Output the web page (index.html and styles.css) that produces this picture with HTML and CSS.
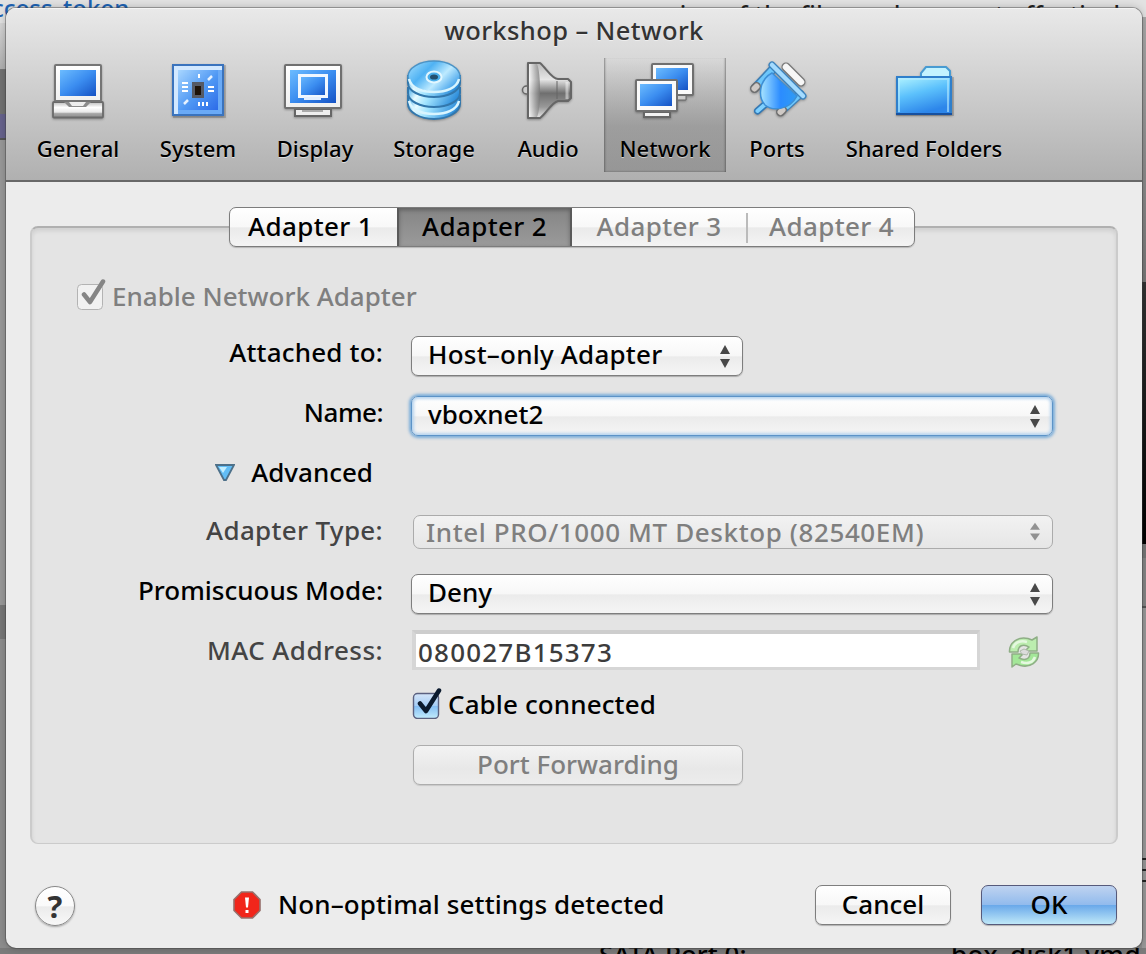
FILE: index.html
```html
<!DOCTYPE html>
<html lang="en">
<head>
<meta charset="utf-8">
<title>workshop – Network</title>
<link rel="stylesheet" href="styles.css">
</head>
<body>
<div class="desktop">
  <div class="back back-top"><span class="back-link">ccess_token</span><span class="back-copy">version of the files and may not effectively</span></div>
  <div class="back back-left"><i class="seg s1"></i><i class="seg s2"></i><i class="seg s3"></i><i class="seg s4"></i><i class="seg s5"></i></div>
  <div class="back back-right"><i class="seg r1"></i><i class="seg r2"></i><i class="seg r3"></i><i class="seg r4"></i><i class="seg r5"></i><i class="seg r6"></i><i class="seg r7"></i></div>
  <div class="back back-bottom"><span class="port">SATA Port 0:</span><span class="disk">box_disk1.vmd</span></div>

  <main class="window">
    <header class="head">
      <h1 class="title">workshop – Network</h1>
      <nav class="toolbar">
        <a class="tool">
          <svg class="icon" viewBox="46 58 64 64">
            <defs>
              <linearGradient id="scr" x1="0" y1="0" x2="1" y2="1"><stop offset="0" stop-color="#6cbcff"/><stop offset=".5" stop-color="#3b8df0"/><stop offset="1" stop-color="#1552c4"/></linearGradient>
              <linearGradient id="frm" x1="0" y1="0" x2="0" y2="1"><stop offset="0" stop-color="#fff"/><stop offset="1" stop-color="#f0f0f0"/></linearGradient>
              <linearGradient id="base" x1="0" y1="0" x2="0" y2="1"><stop offset="0" stop-color="#bbb"/><stop offset=".35" stop-color="#fff"/><stop offset=".65" stop-color="#e8e8e8"/><stop offset=".75" stop-color="#a5a5a5"/><stop offset="1" stop-color="#8e8e8e"/></linearGradient>
            </defs>
            <rect x="53" y="102" width="50" height="15.500" rx="1" fill="url(#base)" stroke="#6a6a6a" stroke-width="1.800"/>
            <path d="M64 102h27l-5 5H69z" fill="#8c8c8c"/>
            <path d="M69 102h17l-3 4H72z" fill="#eee"/>
            <rect x="55" y="65" width="46" height="36" rx="1" fill="url(#frm)" stroke="#757575" stroke-width="2"/>
            <rect x="60" y="70" width="36" height="26" fill="url(#scr)"/>
          </svg><span>General</span></a>
        <a class="tool">
          <svg class="icon" viewBox="166 58 64 64">
            <defs><linearGradient id="chip" x1="0" y1="0" x2="1" y2="1"><stop offset="0" stop-color="#a8d6ff"/><stop offset=".55" stop-color="#4f98f4"/><stop offset="1" stop-color="#2c6be8"/></linearGradient></defs>
            <rect x="173" y="65" width="53" height="53" fill="#333" opacity=".2"/>
            <rect x="173" y="65" width="50" height="50" fill="#6aaaf6" stroke="#3a73bd" stroke-width="2"/>
            <path d="M176 114V68h46" fill="none" stroke="#d2e8ff" stroke-width="4"/>
            <rect x="178" y="70" width="40" height="40" fill="url(#chip)"/>
            <path d="M192 82h12v16h-12z" fill="#555a66"/><path d="M195 86h6v9h-6z" fill="#1d1209"/>
            <path d="M199 74v4M182 83h6M182 87h6M182 91h6M208 87h6M208 91h6M199 102v4M203 102v4M207 102v4" stroke="#fff" stroke-width="2"/>
            <path d="M208 80l4-4M184 104l4-4" stroke="#e6f2ff" stroke-width="2.500"/>
          </svg><span>System</span></a>
        <a class="tool">
          <svg class="icon" viewBox="283 58 64 64">
            <path d="M295 109h36v7h-36z" fill="#eee" stroke="#666" stroke-width="2"/>
            <path d="M302 110h21v2h-21z" fill="#aaa"/>
            <rect x="285" y="65" width="56" height="43" rx="1" fill="url(#frm)" stroke="#707070" stroke-width="2"/>
            <rect x="290" y="70" width="46" height="33" fill="url(#scr)"/>
            <rect x="299.500" y="75.500" width="27" height="21" fill="url(#scr)" stroke="#f0f7ff" stroke-width="3"/>
            <path d="M304 97h17v3h-17z" fill="#e3efff"/>
          </svg><span>Display</span></a>
        <a class="tool">
          <svg class="icon" viewBox="402 58 64 64">
            <defs>
              <linearGradient id="disk" x1="0" x2="1" y1="0" y2=".25"><stop offset="0" stop-color="#3ba5e8"/><stop offset=".25" stop-color="#e8fbff"/><stop offset=".5" stop-color="#a2e4ff"/><stop offset="1" stop-color="#2e8edb"/></linearGradient>
              <linearGradient id="dtop" x1="0" x2="1" y1="0" y2=".6"><stop offset="0" stop-color="#a9e2ff"/><stop offset=".4" stop-color="#4fb2f3"/><stop offset=".7" stop-color="#bdeaff"/><stop offset="1" stop-color="#4aa6ec"/></linearGradient>
            </defs>
            <g fill="url(#disk)" stroke="#3277ac" stroke-width="2">
              <path d="M408 96v8c0 8 12 15 26 15s26-7 26-15v-8z"/>
              <path d="M408 88v5c0 8 12 14 26 14s26-6 26-14v-5z"/>
              <path d="M408 76v7c0 8 12 14 26 14s26-6 26-14v-7z"/>
            </g>
            <ellipse cx="434" cy="76.500" rx="26" ry="15.500" fill="url(#dtop)" stroke="#4b93c6" stroke-width="1.500"/>
            <path d="M409 79c2 9 13 13 25 13s23-4 25-13M409 101c2 9 13 13 25 13s23-4 25-13" fill="none" stroke="#d9f5ff" stroke-width="2.500"/>
            <ellipse cx="434" cy="77" rx="7.500" ry="5.500" fill="#4aaeea" stroke="#e3f7ff" stroke-width="2"/>
            <ellipse cx="434" cy="77" rx="4" ry="2.600" fill="#24506f"/>
          </svg><span>Storage</span></a>
        <a class="tool">
          <svg class="icon" viewBox="516 58 64 64">
            <defs><linearGradient id="horn" x1="0" x2="0" y1="0" y2="1"><stop offset="0" stop-color="#bbb"/><stop offset=".3" stop-color="#e6e6e6"/><stop offset=".55" stop-color="#6f6f6f"/><stop offset=".8" stop-color="#999"/><stop offset="1" stop-color="#e8e8e8"/></linearGradient>
            <linearGradient id="cone" x1="0" x2="1"><stop offset="0" stop-color="#fff"/><stop offset=".6" stop-color="#aaa"/><stop offset="1" stop-color="#777"/></linearGradient></defs>
            <circle cx="526.500" cy="90" r="4" fill="#ccc" stroke="#666" stroke-width="1.500"/>
            <path d="M528 63h12c6 5 12 16 18 16h10l3 3v16l-3 3h-10c-7 2-12 13-18 17h-12z" fill="url(#horn)" stroke="#666" stroke-width="2" stroke-linejoin="round"/>
            <path d="M529 64h8c4 8 4 45 0 53h-8z" fill="url(#cone)" opacity=".75"/>
            <path d="M557 81v18" stroke="#666" stroke-width="2" opacity=".5"/>
            <path d="M567 82v17" stroke="#fff" stroke-width="3" opacity=".45"/>
          </svg><span>Audio</span></a>
        <a class="tool active">
          <svg class="icon" viewBox="633 58 64 64">
            <path d="M676 95h10v5h-10z" fill="#ccc" stroke="#666"/>
            <rect x="652" y="64" width="41" height="31" rx="1" fill="#fafafa" stroke="#707070" stroke-width="2"/>
            <rect x="656" y="68" width="32" height="22" fill="url(#scr)"/>
            <path d="M644 112h26v5h-26z" fill="#f2f2f2" stroke="#666" stroke-width="2"/>
            <rect x="636" y="80" width="41" height="31" rx="1" fill="#fafafa" stroke="#707070" stroke-width="2"/>
            <rect x="640" y="84" width="32" height="22" fill="url(#scr)"/>
          </svg><span>Network</span></a>
        <a class="tool">
          <svg class="icon" viewBox="745 58 64 64">
            <defs><linearGradient id="plug" x1="0" x2="1"><stop offset="0" stop-color="#a8e4ff"/><stop offset=".55" stop-color="#2b8cff"/><stop offset="1" stop-color="#2f9cf4"/></linearGradient></defs>
            <g stroke-linecap="round" fill="none">
              <path d="M786 67L801 82" stroke="#777" stroke-width="9"/><path d="M786 67L801 82" stroke="#f7f7f7" stroke-width="6.500"/>
              <path d="M755 88L772 70M781 111L800 94" stroke="#3f7fb5" stroke-width="9"/>
              <path d="M760 83L772 70M787 106L800 94" stroke="#6cc6fb" stroke-width="6"/>
              <path d="M754.500 88.500l2-2M780.500 112l2-2" stroke="#6f6f6f" stroke-width="9"/>
              <path d="M754.500 88.500l2-2M780.500 112l2-2" stroke="#cfcac6" stroke-width="6"/>
              <path d="M757.500 111l8-7" stroke="#3278b5" stroke-width="7"/><path d="M757.500 111l8-7" stroke="#7fd0ff" stroke-width="4"/>
              <path d="M772 73L797 96C789 111 772 111 765 105C757 96 760 79 772 73z" fill="url(#plug)" stroke="#3c8fd6" stroke-width="1.500"/>
              <path d="M772 65L803 96" stroke="#3a82bd" stroke-width="7"/><path d="M772 65L803 96" stroke="#a4dbff" stroke-width="4.500"/>
            </g>
          </svg><span>Ports</span></a>
        <a class="tool">
          <svg class="icon" viewBox="892 58 64 64">
            <defs><linearGradient id="fold" x1="0" y1="0" x2=".4" y2="1"><stop offset="0" stop-color="#b4f5ff"/><stop offset=".5" stop-color="#5cc1fc"/><stop offset="1" stop-color="#2d86ea"/></linearGradient></defs>
            <path d="M921 77v-4l5-6h20l4 4v7z" fill="#c3f3ff" stroke="#489bd2" stroke-width="2"/>
            <rect x="896" y="77" width="58" height="39" fill="#222" opacity=".2"/>
            <rect x="897" y="77" width="54" height="37" fill="url(#fold)" stroke="#2f7fcb" stroke-width="2"/>
            <path d="M899 112V79h49v33" fill="none" stroke="#b9ecff" stroke-width="2" opacity=".6"/>
            <path d="M896 114h56" stroke="#17509f" stroke-width="2"/>
          </svg><span>Shared Folders</span></a>
      </nav>
    </header>

    <section class="body">
      <div class="tabs">
        <button class="tab">Adapter 1</button><button class="tab on">Adapter 2</button><button class="tab off">Adapter 3</button><button class="tab off">Adapter 4</button>
      </div>
      <div class="panel">
        <label class="check enable"><svg class="box" viewBox="0 0 30 32"><rect x="1.500" y="6.500" width="25" height="25" rx="4" fill="#f1f1f1" stroke="#b3b3b3"/><path d="M8 16.500l6 7.500L27 3.500" fill="none" stroke="#858585" stroke-width="4.500" stroke-linecap="round" stroke-linejoin="round"/></svg><span>Enable Network Adapter</span></label>
        <div class="form">
          <span class="label l-att">Attached to:</span>
          <div class="select short"><span class="v-host">Host–only Adapter</span><i class="arrows"></i></div>

          <span class="label l-name">Name:</span>
          <div class="select focus"><span>vboxnet2</span><i class="arrows"></i></div>

          <span class="label adv"><svg class="tri" viewBox="0 0 20 17"><path d="M1 1h18L11 16H9z" fill="#62bdf5" stroke="#4d7089" stroke-width="1.800"/><path d="M4 3h8l-4 6z" fill="#c3eeff"/></svg>Advanced</span>
          <span></span>

          <span class="label dim l-type">Adapter Type:</span>
          <div class="select disabled"><span>Intel PRO/1000 MT Desktop (82540EM)</span><i class="arrows"></i></div>

          <span class="label">Promiscuous Mode:</span>
          <div class="select"><span>Deny</span><i class="arrows"></i></div>

          <span class="label dim l-mac">MAC Address:</span>
          <div class="mac"><div class="field">080027B15373</div>
            <svg class="refresh" viewBox="0 0 32 32"><g stroke="#86a97c" stroke-width="1.500" stroke-linejoin="round"><path d="M1.500 16C1 7 10 0 20 2.500L24 4l5-3v14H17l4-4C15 7 10 10 10 16z" fill="#b8eeaa"/><path d="M30.500 17c.5 9-8.500 15-18 12.500L8 28l-4 3V18h11l-4 4c6 3 11 1 11-5z" fill="#9de890"/></g><path d="M5 12C7 6 13 4 19 6M27 21c-2 6-8 7-14 5" fill="none" stroke="#e6fbe0" stroke-width="2.500"/><path d="M12 15l4-2 5 2-2 4-5-1z" fill="#dcdcdc" stroke="#a9b5a6"/></svg></div>

          <span></span>
          <label class="check cable"><svg class="box" viewBox="0 0 30 32"><defs><linearGradient id="blue" x1="0" x2="0" y1="0" y2="1"><stop offset="0" stop-color="#d5e5f8"/><stop offset=".5" stop-color="#a5cdf6"/><stop offset=".52" stop-color="#86bff4"/><stop offset="1" stop-color="#c2ecfc"/></linearGradient></defs><rect x="1.500" y="6.500" width="25" height="25" rx="4" fill="url(#blue)" stroke="#5b6180" stroke-width="1.400"/><path d="M8 16.500l6 7.500L27 3.500" fill="none" stroke="#0b1a2e" stroke-width="4.500" stroke-linecap="round" stroke-linejoin="round"/></svg><span>Cable connected</span></label>

          <span></span>
          <button class="btn pf">Port Forwarding</button>
        </div>
      </div>
    </section>

    <footer class="foot">
      <button class="help">?</button>
      <svg class="error" viewBox="0 0 28 28"><path d="M8.500 1h11L27 8.500v11L19.500 27h-11L1 19.500v-11z" fill="#f1261b" stroke="#97706c" stroke-width="1.600"/><path d="M12 6.500h4l-1 10h-2z" fill="#fff"/><rect x="12.500" y="19" width="3" height="3" fill="#fff"/></svg>
      <span class="status">Non–optimal settings detected</span>
      <button class="btn cancel">Cancel</button>
      <button class="btn ok">OK</button>
    </footer>
  </main>
</div>
</body>
</html>
```
FILE: styles.css
```css
* { box-sizing: border-box; }
body { margin: 0; font: 500 26px/30px "Noto Sans", "Open Sans", sans-serif; color: #000; }
button { font: inherit; color: inherit; letter-spacing: inherit; margin: 0; padding: 0; background: none; border: 0; }
.desktop { position: relative; width: 1146px; height: 954px; overflow: hidden; background: #8b8b8b; }

/* windows behind the dialog */
.back { position: absolute; overflow: hidden; white-space: nowrap; }
.back-top { left: 0; top: 0; width: 1146px; height: 23px; background: #e2e2e2; }
.back-link { position: absolute; left: -8px; top: -9px; color: #1e63b4; font-size: 24px; line-height: 34px; }
.back-copy { position: absolute; left: 630px; top: -3px; line-height: 34px; color: #222; letter-spacing: .4px; font-size: 24px; }
.back-left { left: 0; top: 23px; width: 6px; height: 931px; background: #8d8d8d; }
.back-right { left: 1142px; top: 17px; width: 4px; height: 937px; background: #989898; }
.back-bottom { left: 0; top: 948px; width: 1146px; height: 6px; background: #7b7b7b; }
.port, .disk { position: absolute; top: -9px; line-height: 30px; font-size: 26px; }
.port { left: 599px; }
.disk { left: 951px; letter-spacing: .5px; }
.seg { display: block; }
.s1 { height: 47px; background: linear-gradient(#d5d5d5, #b0b0b0); border-bottom: 1px solid #777; }
.s2 { height: 44px; background: #717171; }
.s3 { height: 26px; background: #67638d; border-bottom: 2px solid #555; }
.s4 { height: 465px; background: #999; }
.s5 { height: 34px; background: #777; }
.r1 { height: 265px; background: linear-gradient(#aaa, #777); }
.r2 { height: 262px; background: linear-gradient(#333, #000); }
.r3 { height: 64px; background: #858585; border-bottom: 2px solid #555; border-top: 14px solid #777; }
.r4 { height: 250px; background: #999; }
.r5, .r6 { height: 2px; background: #222; margin-bottom: 9px; }
.r7 { height: 2px; background: #222; }

.window { position: absolute; left: 6px; top: 8px; width: 1136px; height: 940px; display: flex; flex-direction: column; background: #ececec; border-radius: 10px; overflow: hidden; box-shadow: 0 0 0 1px rgba(60,60,60,.4), 0 0 8px rgba(0,0,0,.25); }
.head { height: 174px; flex: none; background: linear-gradient(#e9e9e9, #b0b0b0); border-bottom: 2px solid #686868; box-shadow: inset 0 1px #f4f4f4; }
.title { margin: 0; padding-top: 7px; height: 50px; text-align: center; font-weight: 500; font-size: 25.500px; letter-spacing: .4px; color: #333; text-shadow: 0 1px #eee; }
.toolbar { display: grid; grid-template-columns: 128px 112px 122px 116px 112px 122px 102px 192px; padding-left: 8px; }
.tool { display: flex; flex-direction: column; align-items: center; height: 114px; font-size: 22px; line-height: 36px; white-space: nowrap; text-shadow: 0 1px rgba(255,255,255,.55); }
.tool span { margin-top: 8px; }
.icon { width: 64px; height: 64px; display: block; filter: drop-shadow(0 1px 1px rgba(0,0,0,.3)); }
.active { background: linear-gradient(rgba(90,90,90,0), rgba(90,90,90,.35) 60%, rgba(90,90,90,.32)); box-shadow: inset 2px -1px 2px -1px rgba(60,60,60,.5), inset -2px 0 2px -1px rgba(60,60,60,.5); }

.body { flex: none; padding: 25px 24px 0; height: 662px; }
.tabs { position: relative; z-index: 1; display: grid; grid-template-columns: 167px 175px 174px 168px; width: 686px; margin: 0 auto 0 199px; height: 40px; border: 1px solid #7c7c7c; border-radius: 7px; overflow: hidden; background: linear-gradient(#fff, #f8f8f8 50%, #eaeaea 52%, #f4f4f4); box-shadow: 0 1px 1px rgba(0,0,0,.2); letter-spacing: .35px; }
.tab { line-height: 30px; padding: 0 6px 2px 0; white-space: nowrap; }
.tab.on { padding-right: 0; background: linear-gradient(#858585, #9a9a9a); border: solid #5a5a5a; border-width: 0 2px; box-shadow: inset 0 2px 4px rgba(0,0,0,.3); }
.tab.off { color: #7f7f7f; padding-right: 0; padding-left: 3px; background: linear-gradient(#bbb, #bbb) no-repeat 0 5px / 2px 30px; }
.tab.on + .off { padding-left: 0; background: none; }
.panel { margin-top: -21px; height: 618px; background: #e4e4e4; border: 2px solid #cbcbcb; border-top-color: #b0b0b0; border-bottom-width: 1px; border-radius: 8px; box-shadow: inset 0 3px 4px rgba(0,0,0,.09); padding: 50px 0 0; }
.check { display: flex; white-space: nowrap; }
.box { width: 30px; height: 32px; flex: none; }
.enable { color: #7f7f7f; margin-left: 44px; height: 58px; }
.enable span { margin: 3px 0 0 6px; }
.form { display: grid; grid-template-columns: 351px 642px; grid-template-rows: 60px 60px 58px 60px 60px 54px 57px 40px; column-gap: 28px; white-space: nowrap; }
.label { text-align: right; padding-top: 1px; }
.l-att { letter-spacing: .18px; }
.l-name { letter-spacing: -.5px; }
.l-type { letter-spacing: .32px; }
.l-mac { letter-spacing: .45px; }
.adv { padding-right: 10px; }
.tri { width: 20px; height: 17px; margin-right: 16px; vertical-align: 1px; }
.dim { color: #444; }
.select { position: relative; width: 642px; height: 40px; border: 1px solid #7e7e7e; border-radius: 7px; padding-left: 16px; line-height: 34px; background: linear-gradient(#fff, #f7f7f7 50%, #ebebeb 52%, #f5f5f5); box-shadow: 0 1px 1px rgba(0,0,0,.25); }
.short { width: 332px; }
.v-host { letter-spacing: .22px; }
.focus { border-color: #5c93c7; box-shadow: 0 0 3px 2px #7badd9, inset 0 0 3px 2px #b8d4ee; }
.disabled { margin: 1px 0 0 2px; width: 640px; height: 34px; line-height: 32px; letter-spacing: .6px; color: #7f7f7f; border-color: #ababab; padding-left: 12px; background: linear-gradient(#f2f2f2, #e6e6e6); box-shadow: none; }
.arrows { position: absolute; right: 11px; top: 8px; width: 11px; height: 24px; }
.arrows::before, .arrows::after { content: ""; position: absolute; left: 0; border: 5.500px solid transparent; }
.arrows::before { top: 0; border-bottom: 9px solid #484848; border-top: 0; }
.arrows::after { bottom: 1px; border-top: 9px solid #484848; border-bottom: 0; }
.disabled .arrows { transform: translateY(-4px) scaleY(.78); opacity: .55; }
.mac { display: flex; }
.field { margin: -4px 0 0 1px; width: 568px; height: 40px; border: 4px solid #d6d6d6; border-top-color: #cdcdcd; border-bottom-width: 3px; border-right-width: 3px; background: #fff; color: #3c3c3c; line-height: 36px; padding-left: 2px; letter-spacing: 1.200px; }
.refresh { width: 32px; height: 32px; margin: 2px 0 0 28px; opacity: .9; }
.cable { margin-left: 1px; margin-top: -1px; letter-spacing: .12px; }
.cable span { margin: 2px 0 0 6px; }
.btn { border: 1px solid #7e7e7e; border-radius: 7px; height: 41px; padding-bottom: 2px; background: linear-gradient(#fff, #f7f7f7 50%, #ebebeb 52%, #f5f5f5); box-shadow: 0 1px 1px rgba(0,0,0,.25); }
.pf { width: 330px; height: 40px; margin-left: 2px; color: #7f7f7f; border-color: #adadad; background: linear-gradient(#f3f3f3, #e8e8e8 60%, #ececec); box-shadow: 0 1px 1px rgba(0,0,0,.12); }

.foot { display: flex; padding: 41px 25px 0 29px; white-space: nowrap; }
.foot > * { flex: none; }
.help { width: 40px; height: 40px; margin-top: 1px; border: 1px solid #888; border-radius: 50%; background: linear-gradient(#fff, #fafafa 50%, #ebebeb 52%, #f8f8f8); box-shadow: 0 1px 2px rgba(0,0,0,.3); font-weight: 700; font-size: 31px; line-height: 36px; color: #333; }
.error { width: 28px; height: 28px; margin: 6px 0 0 158px; }
.status { margin: 4px 0 0 17px; width: 537px; letter-spacing: .1px; }
.btn.cancel, .btn.ok { width: 136px; height: 40px; }
.ok { margin-left: 30px; border-color: #565a7b; background: linear-gradient(#bfd3f0, #92bbed 49%, #6aa9ea 51%, #bfe8f8); }
```
